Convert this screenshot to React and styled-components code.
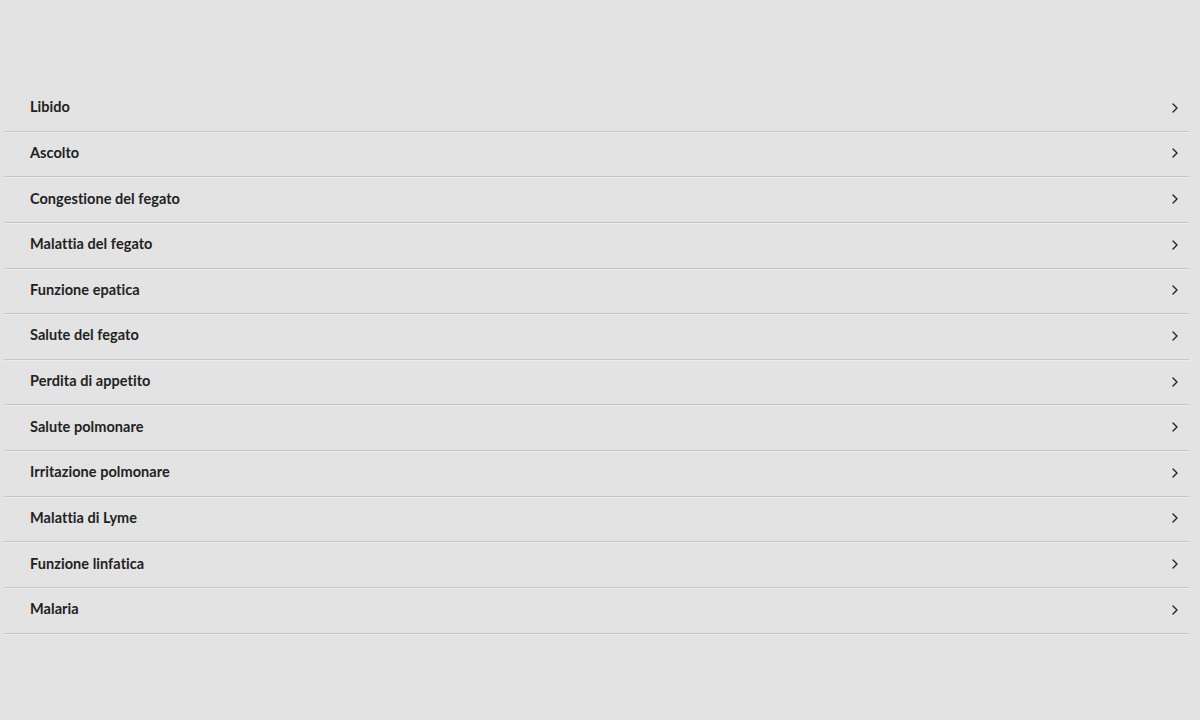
import React from 'react';
import styled, { createGlobalStyle } from 'styled-components';
import { ChevronRight } from 'lucide-react';

const GlobalStyle = createGlobalStyle`
  html, body {
    margin: 0;
    padding: 0;
    background: #e3e3e3;
    font-family: Lato, "Liberation Sans", sans-serif;
  }
`;

const Page = styled.main`
  width: 1200px;
  height: 720px;
  padding: 86px 11px 0 4px;
  box-sizing: border-box;
`;

const List = styled.ul`
  list-style: none;
  margin: 0;
  padding: 0;
`;

const Row = styled.li`
  display: flex;
  align-items: center;
  justify-content: space-between;
  height: 45.64px;
  box-sizing: border-box;
  padding: 0 6px 3px 26px;
  border-bottom: 1px solid #c6c6c6;
  box-shadow: 0 1px 0 #ececec;
  color: #222;
  font-size: 14.5px;
  font-weight: 700;
  font-variant-ligatures: none;
  letter-spacing: 0.05px;
  cursor: pointer;
`;

const Arrow = styled.span`
  display: flex;
  padding-top: 2px;
  color: #222;
`;

const items = [
  'Libido',
  'Ascolto',
  'Congestione del fegato',
  'Malattia del fegato',
  'Funzione epatica',
  'Salute del fegato',
  'Perdita di appetito',
  'Salute polmonare',
  'Irritazione polmonare',
  'Malattia di Lyme',
  'Funzione linfatica',
  'Malaria',
];

export default function App() {
  return (
    <>
      <GlobalStyle />
      <Page>
        <List>
          {items.map((item) => (
            <Row key={item}>
              {item}
              <Arrow>
                <ChevronRight size={16} strokeWidth={2} />
              </Arrow>
            </Row>
          ))}
        </List>
      </Page>
    </>
  );
}
